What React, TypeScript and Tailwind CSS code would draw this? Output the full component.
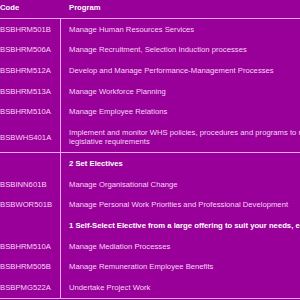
type Row = { code: string; name: string; bold?: boolean; nowrap?: boolean };

const core: Row[] = [
  { code: "BSBHRM501B", name: "Manage Human Resources Services" },
  { code: "BSBHRM506A", name: "Manage Recruitment, Selection Induction processes" },
  { code: "BSBHRM512A", name: "Develop and Manage Performance-Management Processes" },
  { code: "BSBHRM513A", name: "Manage Workforce Planning" },
  { code: "BSBHRM510A", name: "Manage Employee Relations" },
  {
    code: "BSBWHS401A",
    name: "Implement and monitor WHS policies, procedures and programs to meet legislative requirements",
  },
];

const electives: Row[] = [
  { code: "", name: "2 Set Electives", bold: true },
  { code: "BSBINN601B", name: "Manage Organisational Change" },
  { code: "BSBWOR501B", name: "Manage Personal Work Priorities and Professional Development" },
  {
    code: "",
    name: "1 Self-Select Elective from a large offering to suit your needs, e.g.",
    bold: true,
    nowrap: true,
  },
  { code: "BSBHRM510A", name: "Manage Mediation Processes" },
  { code: "BSBHRM505B", name: "Manage Remuneration Employee Benefits" },
  { code: "BSBPMG522A", name: "Undertake Project Work" },
];

const Section = ({ rows }: { rows: Row[] }) => {
  return (
    <div className="flex flex-col border-b border-[#f2a8f2]">
      {rows.map((row, index) => (
        <div key={index} className="grid grid-cols-[60px_280px]">
          <div className="py-[5.7px] pl-0 pr-1 flex items-center whitespace-nowrap text-[#f6d6f6]">{row.code}</div>
          <div
            className={`border-l border-[#f2a8f2] py-[5.7px] pl-[8px] pr-[12px] flex items-center ${
              row.bold ? "font-bold text-white" : "text-[#f6d6f6]"
            } ${row.nowrap ? "whitespace-nowrap" : ""}`}
          >
            {row.name}
          </div>
        </div>
      ))}
    </div>
  );
};

export default function App() {
  return (
    <div className="w-[300px] h-[300px] overflow-hidden bg-[#990099] font-['Liberation_Sans',Arial,sans-serif] text-[7.7px] leading-[9.3px]">
      <div className="w-[340px] flex flex-col">
        <div className="grid grid-cols-[60px_280px] h-[19px] border-b border-[#f2a8f2] font-bold text-white">
          <div className="pt-[3.4px]">Code</div>
          <div className="pt-[3.4px] pl-[9px]">Program</div>
        </div>
        <Section rows={core} />
        <Section rows={electives} />
      </div>
    </div>
  );
}
